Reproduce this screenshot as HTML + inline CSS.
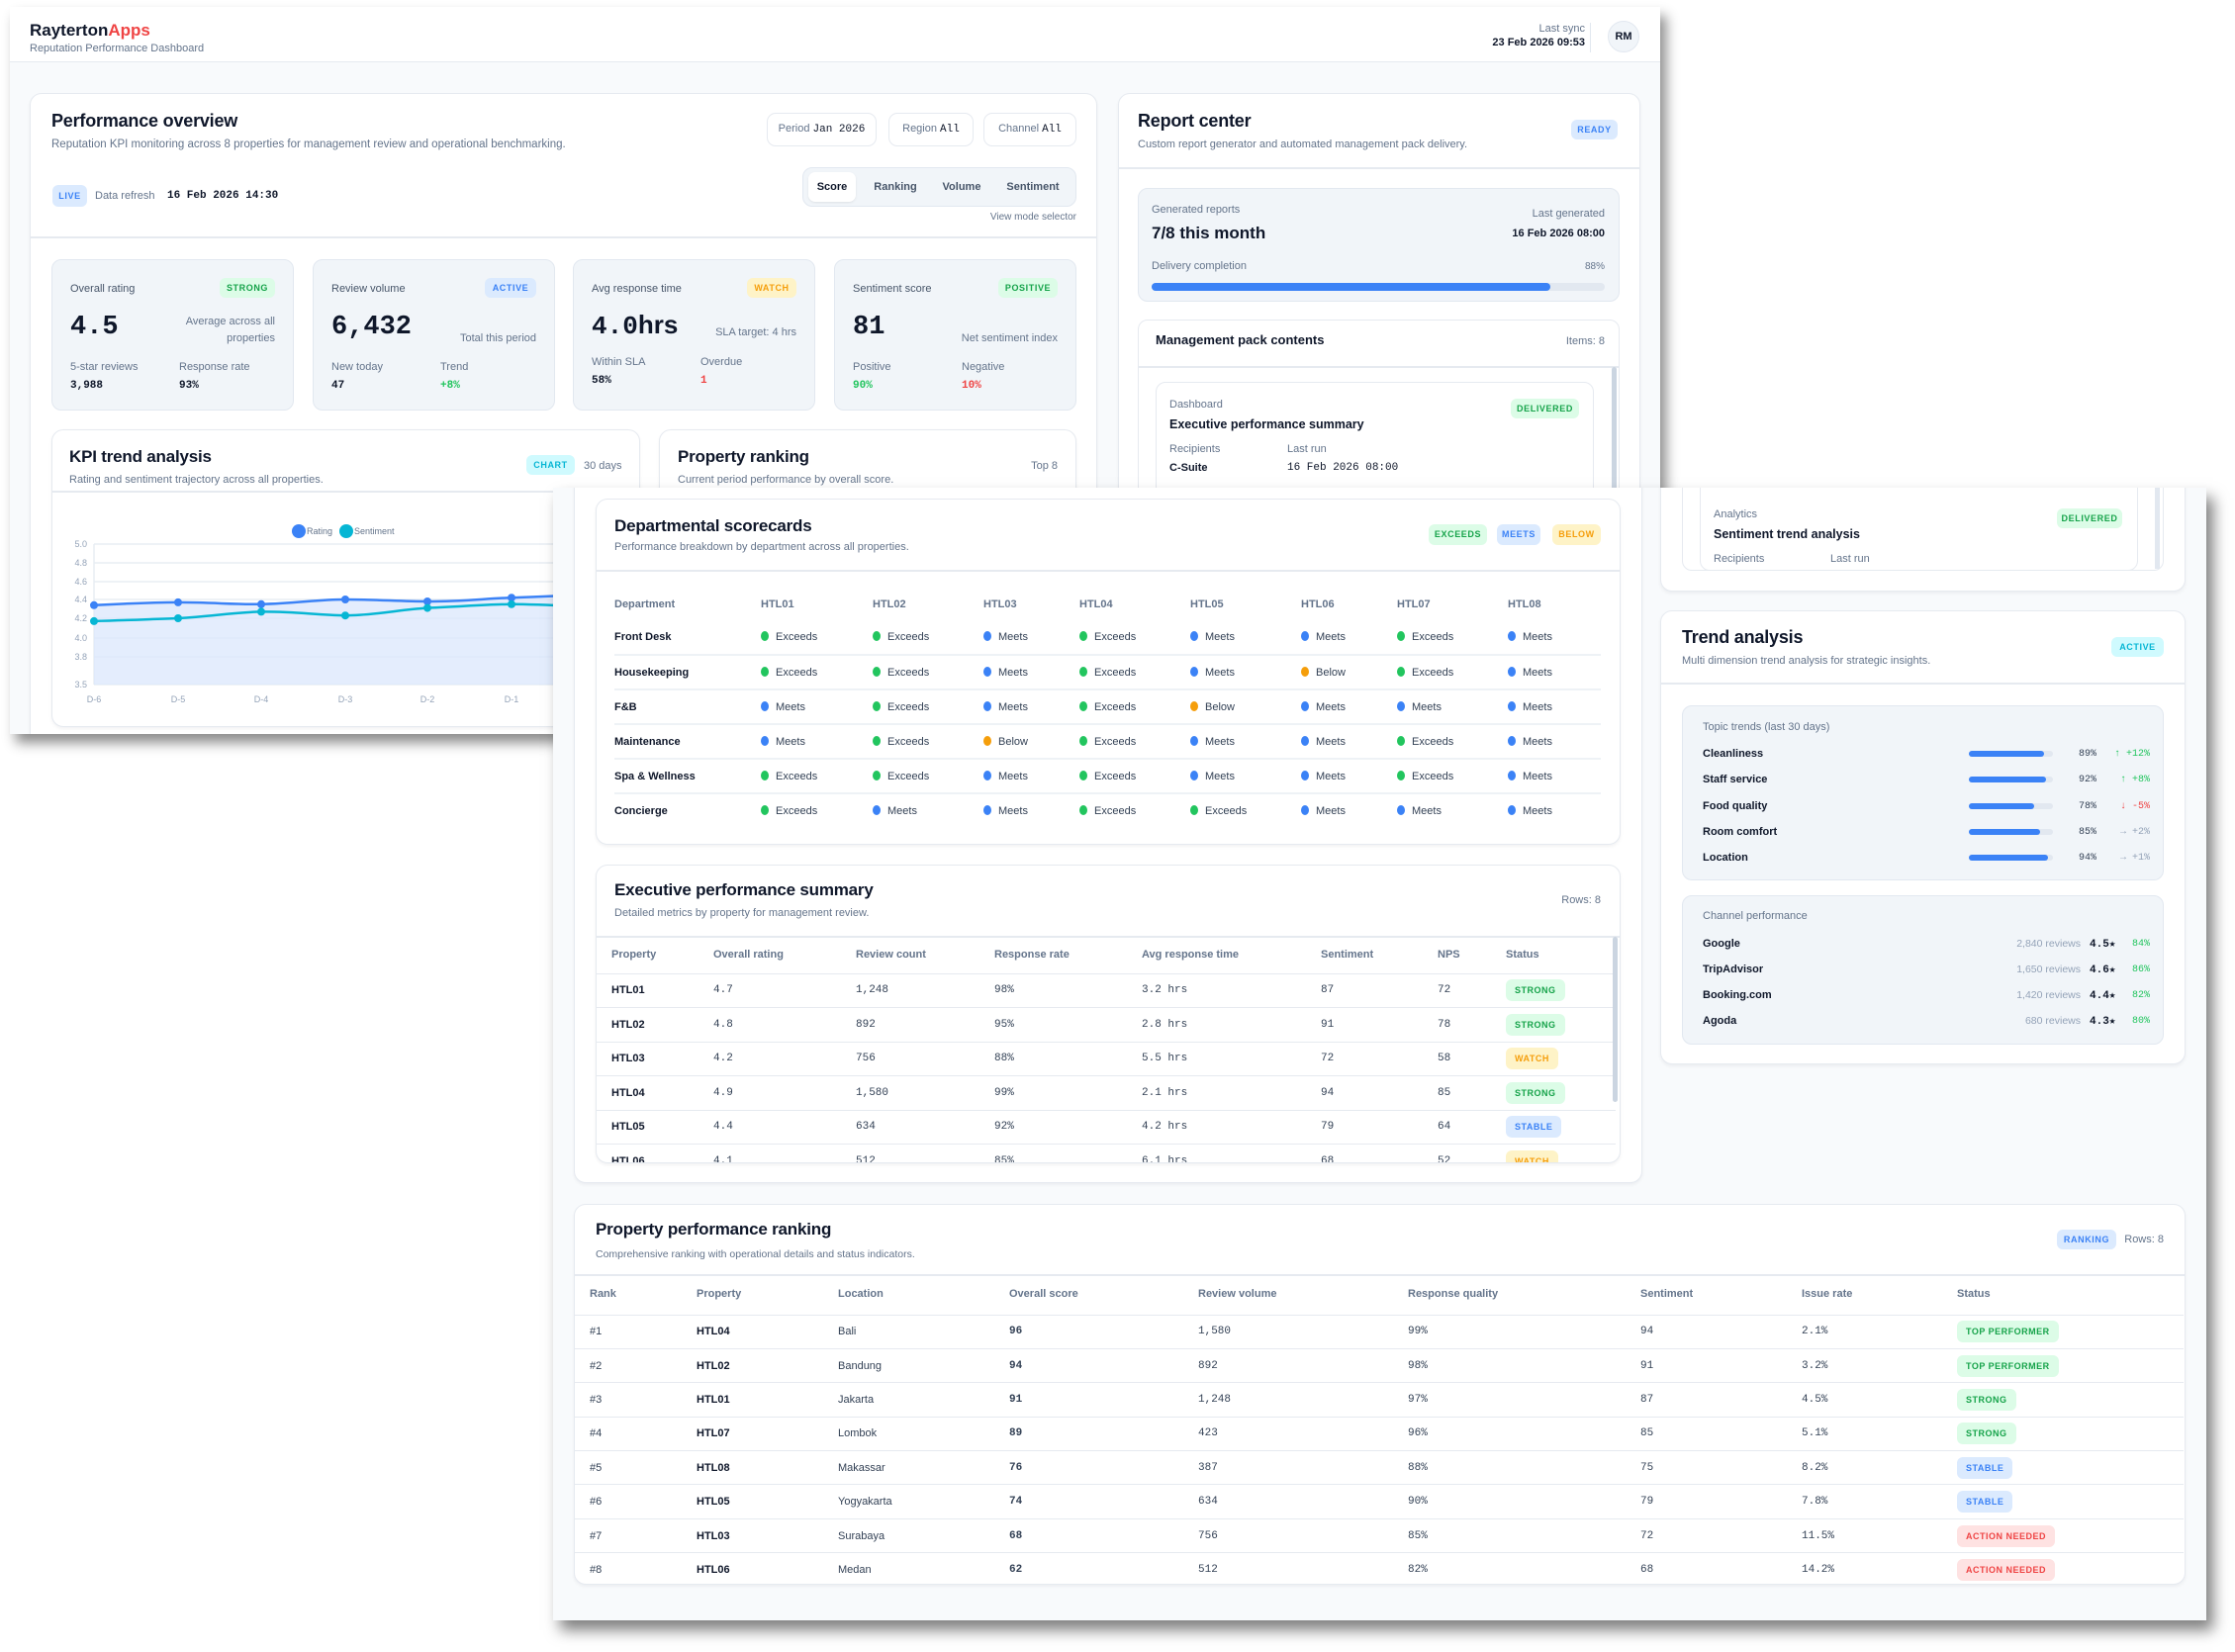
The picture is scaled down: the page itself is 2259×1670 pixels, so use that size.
<!DOCTYPE html>
<html><head><meta charset="utf-8">
<style>
*{box-sizing:border-box}
body{margin:0;width:2259px;height:1670px;background:#fff;position:relative;overflow:hidden;font-family:"Liberation Sans",sans-serif;color:#0f172a}
.p{position:absolute;overflow:hidden;background:#f8fafc}
.a{position:absolute;white-space:nowrap;line-height:16px}
.card{position:absolute;background:#fff;border:1.5px solid #e6eaf0;border-radius:12px;box-shadow:0 2px 3px rgba(15,23,42,.05)}
.box{position:absolute;background:#f1f5f9;border:1.5px solid #e2e8f0;border-radius:10px}
.m{font-family:"Liberation Mono",monospace}
.mu{color:#64748b}
.t{font-size:18px;font-weight:700;line-height:24px;letter-spacing:-.2px}
.s{font-size:11.5px;color:#64748b}
.b{position:absolute;font-size:9px;font-weight:700;letter-spacing:.6px;border-radius:6px;line-height:20px;height:20px;text-align:center}
.ib{display:inline-block;font-size:9px;font-weight:700;letter-spacing:.5px;border-radius:6px;line-height:22px;padding:0 9px}
.g{background:#dcfce7;color:#16a34a}.bl{background:#dbeafe;color:#3b82f6}.o{background:#fef3c7;color:#f59e0b}.r{background:#fee2e2;color:#ef4444}.c{background:#cffafe;color:#06b6d4}
.hl{position:absolute;height:1.5px;background:#e6eaf0}
table{border-collapse:collapse;table-layout:fixed;position:absolute}
td,th{padding:0;text-align:left;white-space:nowrap;font-size:11px}
th{font-weight:600;color:#64748b}
.dt td{height:35px;border-bottom:2px solid #eef2f6;color:#334155}
.dt tr:last-child td{border-bottom:none}
.dt td:first-child{font-weight:700;color:#0f172a}
.d{display:inline-block;width:8px;height:10px;border-radius:50%;margin-right:7px;vertical-align:-1px}
.dg{background:#22c55e}.db{background:#3b82f6}.do{background:#f59e0b}
.et td{height:34.5px;border-top:1.5px solid #e6eaf0;color:#334155}
.et td:first-child,.rt td:nth-child(2){font-weight:700;color:#0f172a}
.rt td{height:34.4px;border-top:1.5px solid #e6eaf0;color:#334155}
</style></head><body>

<!-- PANEL A -->
<div class="p" style="left:10px;top:7px;width:1668px;height:735px;box-shadow:6px 9px 12px rgba(0,0,0,.45)">
 <div class="a" style="left:0;top:0;width:1668px;height:56px;background:#fff;border-bottom:1.5px solid #e6eaf0"></div>
 <div class="a" style="left:20px;top:13px;font-size:17px;font-weight:700;line-height:22px">Rayterton<span style="color:#ef4444">Apps</span></div>
 <div class="a s" style="left:20px;top:34px;font-size:11px">Reputation Performance Dashboard</div>
 <div class="a mu" style="right:76px;top:14px;font-size:11px;text-align:right">Last sync</div>
 <div class="a" style="right:76px;top:28px;font-size:11px;font-weight:600;text-align:right">23 Feb 2026 09:53</div>
 <div class="a" style="left:1597px;top:16px;width:1px;height:30px;background:#e2e8f0"></div>
 <div class="a" style="left:1615px;top:14px;width:32px;height:32px;border-radius:50%;background:#f1f5f9;border:1px solid #e2e8f0;font-size:11px;font-weight:700;text-align:center;line-height:30px">RM</div>

 <!-- Performance overview card -->
 <div class="card" style="left:20px;top:87px;width:1079px;height:700px"></div>
 <div class="a t" style="left:42px;top:103px">Performance overview</div>
 <div class="a s" style="left:42px;top:131px">Reputation KPI monitoring across 8 properties for management review and operational benchmarking.</div>
 <div class="a" style="left:765px;top:107px;width:111px;height:34px;border:1.5px solid #e6eaf0;border-radius:9px;background:#fff;font-size:11px;line-height:31px;text-align:center"><span class="mu">Period</span> <span class="m">Jan 2026</span></div>
 <div class="a" style="left:888px;top:107px;width:86px;height:34px;border:1.5px solid #e6eaf0;border-radius:9px;background:#fff;font-size:11px;line-height:31px;text-align:center"><span class="mu">Region</span> <span class="m">All</span></div>
 <div class="a" style="left:984px;top:107px;width:94px;height:34px;border:1.5px solid #e6eaf0;border-radius:9px;background:#fff;font-size:11px;line-height:31px;text-align:center"><span class="mu">Channel</span> <span class="m">All</span></div>
 <div class="b bl" style="left:43px;top:180px;width:35px;height:22px;line-height:22px">LIVE</div>
 <div class="a s" style="left:86px;top:183px;font-size:11px">Data refresh</div>
 <div class="a m" style="left:159px;top:183px;font-size:11px;font-weight:700">16 Feb 2026 14:30</div>
 <div class="a" style="left:801px;top:162px;width:277px;height:40px;background:#f1f5f9;border:1.5px solid #e2e8f0;border-radius:10px"></div>
 <div class="a" style="left:807px;top:167px;width:48px;height:30px;background:#fff;border-radius:7px;box-shadow:0 1px 2px rgba(0,0,0,.08)"></div>
 <div class="a" style="left:831px;top:174px;transform:translateX(-50%);font-size:11px;font-weight:700">Score</div>
 <div class="a" style="left:895px;top:174px;transform:translateX(-50%);font-size:11px;font-weight:600;color:#475569">Ranking</div>
 <div class="a" style="left:962px;top:174px;transform:translateX(-50%);font-size:11px;font-weight:600;color:#475569">Volume</div>
 <div class="a" style="left:1034px;top:174px;transform:translateX(-50%);font-size:11px;font-weight:600;color:#475569">Sentiment</div>
 <div class="a mu" style="right:590px;top:205px;font-size:10px">View mode selector</div>
 <div class="hl" style="left:21px;top:232px;width:1077px"></div>

 <!-- KPI cards -->
 <div class="box" style="left:42px;top:255px;width:245px;height:153px">
  <div class="a mu" style="left:18px;top:21px;font-size:11px;color:#475569">Overall rating</div>
  <div class="b g" style="right:18px;top:18px;width:56px">STRONG</div>
  <div class="a m" style="left:18px;top:53px;font-size:27px;font-weight:700;line-height:30px">4.5</div>
  <div class="a mu" style="right:18px;top:54px;font-size:11px;text-align:right;line-height:17px;white-space:normal;width:110px">Average across all properties</div>
  <div class="a mu" style="left:18px;top:100px;font-size:11px">5-star reviews</div>
  <div class="a mu" style="left:128px;top:100px;font-size:11px">Response rate</div>
  <div class="a m" style="left:18px;top:119px;font-size:11px;font-weight:700">3,988</div>
  <div class="a m" style="left:128px;top:119px;font-size:11px;font-weight:700">93%</div>
 </div>
 <div class="box" style="left:306px;top:255px;width:245px;height:153px">
  <div class="a mu" style="left:18px;top:21px;font-size:11px;color:#475569">Review volume</div>
  <div class="b bl" style="right:18px;top:18px;width:52px">ACTIVE</div>
  <div class="a m" style="left:18px;top:53px;font-size:27px;font-weight:700;line-height:30px">6,432</div>
  <div class="a mu" style="right:18px;top:71px;font-size:11px">Total this period</div>
  <div class="a mu" style="left:18px;top:100px;font-size:11px">New today</div>
  <div class="a mu" style="left:128px;top:100px;font-size:11px">Trend</div>
  <div class="a m" style="left:18px;top:119px;font-size:11px;font-weight:700">47</div>
  <div class="a m" style="left:128px;top:119px;font-size:11px;font-weight:700;color:#22c55e">+8%</div>
 </div>
 <div class="box" style="left:569px;top:255px;width:245px;height:153px">
  <div class="a mu" style="left:18px;top:21px;font-size:11px;color:#475569">Avg response time</div>
  <div class="b o" style="right:18px;top:18px;width:50px">WATCH</div>
  <div class="a" style="left:18px;top:50px;font-size:26px;font-weight:700;line-height:30px"><span class="m">4.0</span>hrs</div>
  <div class="a mu" style="right:18px;top:65px;font-size:11px">SLA target: 4 hrs</div>
  <div class="a mu" style="left:18px;top:95px;font-size:11px">Within SLA</div>
  <div class="a mu" style="left:128px;top:95px;font-size:11px">Overdue</div>
  <div class="a m" style="left:18px;top:114px;font-size:11px;font-weight:700">58%</div>
  <div class="a m" style="left:128px;top:114px;font-size:11px;font-weight:700;color:#ef4444">1</div>
 </div>
 <div class="box" style="left:833px;top:255px;width:245px;height:153px">
  <div class="a mu" style="left:18px;top:21px;font-size:11px;color:#475569">Sentiment score</div>
  <div class="b g" style="right:18px;top:18px;width:60px">POSITIVE</div>
  <div class="a m" style="left:18px;top:53px;font-size:27px;font-weight:700;line-height:30px">81</div>
  <div class="a mu" style="right:18px;top:71px;font-size:11px">Net sentiment index</div>
  <div class="a mu" style="left:18px;top:100px;font-size:11px">Positive</div>
  <div class="a mu" style="left:128px;top:100px;font-size:11px">Negative</div>
  <div class="a m" style="left:18px;top:119px;font-size:11px;font-weight:700;color:#22c55e">90%</div>
  <div class="a m" style="left:128px;top:119px;font-size:11px;font-weight:700;color:#ef4444">10%</div>
 </div>

 <!-- KPI trend card -->
 <div class="card" style="left:42px;top:427px;width:595px;height:301px"></div>
 <div class="a t" style="left:60px;top:443px;font-size:17px">KPI trend analysis</div>
 <div class="a s" style="left:60px;top:470px;font-size:11px">Rating and sentiment trajectory across all properties.</div>
 <div class="b c" style="left:522px;top:453px;width:49px">CHART</div>
 <div class="a mu" style="left:580px;top:456px;font-size:11px">30 days</div>
 <div class="hl" style="left:43px;top:489px;width:593px"></div>
 <svg class="a" style="left:0;top:0" width="640" height="735">
  <g stroke="#e8edf3" stroke-width="1.5">
   <line x1="85" y1="543" x2="640" y2="543"/><line x1="85" y1="562" x2="640" y2="562"/><line x1="85" y1="581" x2="640" y2="581"/><line x1="85" y1="599" x2="640" y2="599"/><line x1="85" y1="618" x2="640" y2="618"/><line x1="85" y1="638" x2="640" y2="638"/><line x1="85" y1="657" x2="640" y2="657"/><line x1="85" y1="685" x2="640" y2="685"/><line x1="85" y1="543" x2="85" y2="685"/>
  </g>
  <g font-family="Liberation Sans" font-size="9" fill="#94a3b8" text-anchor="end">
   <text x="78" y="546">5.0</text><text x="78" y="565">4.8</text><text x="78" y="584">4.6</text><text x="78" y="602">4.4</text><text x="78" y="621">4.2</text><text x="78" y="641">4.0</text><text x="78" y="660">3.8</text><text x="78" y="688">3.5</text>
  </g>
  <g font-family="Liberation Sans" font-size="9" fill="#94a3b8" text-anchor="middle">
   <text x="85" y="703">D-6</text><text x="170" y="703">D-5</text><text x="254" y="703">D-4</text><text x="339" y="703">D-3</text><text x="422" y="703">D-2</text><text x="507" y="703">D-1</text>
  </g>
  <path d="M85 604.8 C120 603 140 602 170 601.9 C205 602 225 604 254 603.8 C290 603 310 599 339 599 C370 599 395 601 422 601 C460 601 480 598 507 597.2 C540 596 570 595 592 593.4 L640 590 L640 685 L85 685Z" fill="#dbe7fc" opacity=".75"/>
  <path d="M85 604.8 C120 603 140 602 170 601.9 C205 602 225 604 254 603.8 C290 603 310 599 339 599 C370 599 395 601 422 601 C460 601 480 598 507 597.2 C540 596 570 595 592 593.4 L640 590" fill="none" stroke="#3b82f6" stroke-width="2.5"/>
  <path d="M85 620.9 C120 620 140 619 170 618 C205 616 225 612 254 611.4 C290 611 310 615 339 615.2 C370 615 395 609 422 607.6 C460 606 480 604 507 603.8 C540 604 570 606 592 606.7" fill="none" stroke="#06b6d4" stroke-width="2.5"/>
  <g fill="#3b82f6"><circle cx="85" cy="604.8" r="4"/><circle cx="170" cy="601.9" r="4"/><circle cx="254" cy="603.8" r="4"/><circle cx="339" cy="599" r="4"/><circle cx="422" cy="601" r="4"/><circle cx="507" cy="597.2" r="4"/></g>
  <g fill="#06b6d4"><circle cx="85" cy="620.9" r="4"/><circle cx="170" cy="618" r="4"/><circle cx="254" cy="611.4" r="4"/><circle cx="339" cy="615.2" r="4"/><circle cx="422" cy="607.6" r="4"/><circle cx="507" cy="603.8" r="4"/></g>
  <circle cx="292" cy="530" r="7" fill="#3b82f6"/><text x="300" y="533" font-family="Liberation Sans" font-size="9" fill="#64748b">Rating</text>
  <circle cx="340" cy="530" r="7" fill="#06b6d4"/><text x="348" y="533" font-family="Liberation Sans" font-size="9" fill="#64748b">Sentiment</text>
 </svg>

 <!-- Property ranking card -->
 <div class="card" style="left:656px;top:427px;width:422px;height:301px"></div>
 <div class="a t" style="left:675px;top:443px;font-size:17px">Property ranking</div>
 <div class="a s" style="left:675px;top:470px;font-size:11px">Current period performance by overall score.</div>
 <div class="a mu" style="right:609px;top:456px;font-size:11px">Top 8</div>

 <!-- Report center -->
 <div class="card" style="left:1120px;top:87px;width:528px;height:700px"></div>
 <div class="a t" style="left:1140px;top:103px">Report center</div>
 <div class="a s" style="left:1140px;top:131px;font-size:11px">Custom report generator and automated management pack delivery.</div>
 <div class="b bl" style="left:1578px;top:114px;width:47px">READY</div>
 <div class="hl" style="left:1121px;top:162px;width:526px"></div>
 <div class="box" style="left:1140px;top:183px;width:487px;height:115px"></div>
 <div class="a s" style="left:1154px;top:197px;font-size:11px">Generated reports</div>
 <div class="a" style="left:1154px;top:218px;font-size:17px;font-weight:600;line-height:22px">7/8 this month</div>
 <div class="a s" style="right:56px;top:201px;font-size:11px">Last generated</div>
 <div class="a" style="right:56px;top:221px;font-size:11px;font-weight:700">16 Feb 2026 08:00</div>
 <div class="a s" style="left:1154px;top:254px;font-size:11px">Delivery completion</div>
 <div class="a s" style="right:56px;top:255px;font-size:10px">88%</div>
 <div class="a" style="left:1154px;top:279px;width:458px;height:8px;border-radius:4px;background:#e2e8f0"><div style="width:88%;height:8px;border-radius:4px;background:#3b82f6"></div></div>
 <div class="a" style="left:1140px;top:316px;width:487px;height:430px;background:#fff;border:1.5px solid #e6eaf0;border-radius:10px"></div>
 <div class="a" style="left:1158px;top:329px;font-size:13px;font-weight:700">Management pack contents</div>
 <div class="a mu" style="right:56px;top:330px;font-size:11px">Items: 8</div>
 <div class="hl" style="left:1141px;top:363px;width:485px"></div>
 <div class="a" style="left:1619px;top:364px;width:5px;height:380px;background:#cbd5e1;border-radius:3px"></div>
 <div class="a" style="left:1158px;top:379px;width:443px;height:400px;background:#fff;border:1.5px solid #e6eaf0;border-radius:10px"></div>
 <div class="a s" style="left:1172px;top:394px;font-size:11px">Dashboard</div>
 <div class="a" style="left:1172px;top:414px;font-size:12.5px;font-weight:700">Executive performance summary</div>
 <div class="b g" style="left:1517px;top:396px;width:69px">DELIVERED</div>
 <div class="a s" style="left:1172px;top:439px;font-size:11px">Recipients</div>
 <div class="a s" style="left:1291px;top:439px;font-size:11px">Last run</div>
 <div class="a" style="left:1172px;top:458px;font-size:11px;font-weight:700">C-Suite</div>
 <div class="a m" style="left:1291px;top:458px;font-size:11px">16 Feb 2026 08:00</div>
</div>

<!-- PANEL B -->
<div class="p" style="left:559px;top:493px;width:1671px;height:1145px;box-shadow:7px 10px 14px rgba(0,0,0,.5)">
 <!-- left container -->
 <div class="card" style="left:21px;top:-20px;width:1080px;height:723px"></div>
 <!-- Departmental -->
 <div class="card" style="left:43px;top:11px;width:1036px;height:350px"></div>
 <div class="a t" style="left:62px;top:27px;font-size:17px">Departmental scorecards</div>
 <div class="a s" style="left:62px;top:52px;font-size:11px">Performance breakdown by department across all properties.</div>
 <div class="b g" style="left:885px;top:37px;width:59px;height:21px;line-height:21px">EXCEEDS</div>
 <div class="b bl" style="left:954px;top:37px;width:44px;height:21px;line-height:21px">MEETS</div>
 <div class="b o" style="left:1010px;top:37px;width:49px;height:21px;line-height:21px">BELOW</div>
 <div class="hl" style="left:44px;top:83px;width:1034px"></div>
 <table class="dt" style="left:62px;top:101px;width:997px">
  <colgroup><col style="width:148px"><col style="width:113px"><col style="width:112px"><col style="width:97px"><col style="width:112px"><col style="width:112px"><col style="width:97px"><col style="width:112px"><col style="width:94px"></colgroup>
  <tr><th style="height:33px;border:none">Department</th><th>HTL01</th><th>HTL02</th><th>HTL03</th><th>HTL04</th><th>HTL05</th><th>HTL06</th><th>HTL07</th><th>HTL08</th></tr>
  <tr><td>Front Desk</td><td><i class="d dg"></i>Exceeds</td><td><i class="d dg"></i>Exceeds</td><td><i class="d db"></i>Meets</td><td><i class="d dg"></i>Exceeds</td><td><i class="d db"></i>Meets</td><td><i class="d db"></i>Meets</td><td><i class="d dg"></i>Exceeds</td><td><i class="d db"></i>Meets</td></tr>
  <tr><td>Housekeeping</td><td><i class="d dg"></i>Exceeds</td><td><i class="d dg"></i>Exceeds</td><td><i class="d db"></i>Meets</td><td><i class="d dg"></i>Exceeds</td><td><i class="d db"></i>Meets</td><td><i class="d do"></i>Below</td><td><i class="d dg"></i>Exceeds</td><td><i class="d db"></i>Meets</td></tr>
  <tr><td>F&amp;B</td><td><i class="d db"></i>Meets</td><td><i class="d dg"></i>Exceeds</td><td><i class="d db"></i>Meets</td><td><i class="d dg"></i>Exceeds</td><td><i class="d do"></i>Below</td><td><i class="d db"></i>Meets</td><td><i class="d db"></i>Meets</td><td><i class="d db"></i>Meets</td></tr>
  <tr><td>Maintenance</td><td><i class="d db"></i>Meets</td><td><i class="d dg"></i>Exceeds</td><td><i class="d do"></i>Below</td><td><i class="d dg"></i>Exceeds</td><td><i class="d db"></i>Meets</td><td><i class="d db"></i>Meets</td><td><i class="d dg"></i>Exceeds</td><td><i class="d db"></i>Meets</td></tr>
  <tr><td>Spa &amp; Wellness</td><td><i class="d dg"></i>Exceeds</td><td><i class="d dg"></i>Exceeds</td><td><i class="d db"></i>Meets</td><td><i class="d dg"></i>Exceeds</td><td><i class="d db"></i>Meets</td><td><i class="d db"></i>Meets</td><td><i class="d dg"></i>Exceeds</td><td><i class="d db"></i>Meets</td></tr>
  <tr><td>Concierge</td><td><i class="d dg"></i>Exceeds</td><td><i class="d db"></i>Meets</td><td><i class="d db"></i>Meets</td><td><i class="d dg"></i>Exceeds</td><td><i class="d dg"></i>Exceeds</td><td><i class="d db"></i>Meets</td><td><i class="d db"></i>Meets</td><td><i class="d db"></i>Meets</td></tr>
 </table>

 <!-- Executive summary -->
 <div class="card" style="left:43px;top:381px;width:1036px;height:302px;overflow:hidden">
  <table class="et" style="left:0;top:72px;width:1030px">
   <colgroup><col style="width:118px"><col style="width:144px"><col style="width:140px"><col style="width:149px"><col style="width:181px"><col style="width:118px"><col style="width:69px"><col style="width:111px"></colgroup>
   <tr><th style="height:37px;padding-left:15px">Property</th><th>Overall rating</th><th>Review count</th><th>Response rate</th><th>Avg response time</th><th>Sentiment</th><th>NPS</th><th>Status</th></tr>
   <tr><td style="padding-left:15px">HTL01</td><td class="m">4.7</td><td class="m">1,248</td><td class="m">98%</td><td class="m">3.2 hrs</td><td class="m">87</td><td class="m">72</td><td><span class="ib g">STRONG</span></td></tr>
   <tr><td style="padding-left:15px">HTL02</td><td class="m">4.8</td><td class="m">892</td><td class="m">95%</td><td class="m">2.8 hrs</td><td class="m">91</td><td class="m">78</td><td><span class="ib g">STRONG</span></td></tr>
   <tr><td style="padding-left:15px">HTL03</td><td class="m">4.2</td><td class="m">756</td><td class="m">88%</td><td class="m">5.5 hrs</td><td class="m">72</td><td class="m">58</td><td><span class="ib o">WATCH</span></td></tr>
   <tr><td style="padding-left:15px">HTL04</td><td class="m">4.9</td><td class="m">1,580</td><td class="m">99%</td><td class="m">2.1 hrs</td><td class="m">94</td><td class="m">85</td><td><span class="ib g">STRONG</span></td></tr>
   <tr><td style="padding-left:15px">HTL05</td><td class="m">4.4</td><td class="m">634</td><td class="m">92%</td><td class="m">4.2 hrs</td><td class="m">79</td><td class="m">64</td><td><span class="ib bl">STABLE</span></td></tr>
   <tr><td style="padding-left:15px">HTL06</td><td class="m">4.1</td><td class="m">512</td><td class="m">85%</td><td class="m">6.1 hrs</td><td class="m">68</td><td class="m">52</td><td><span class="ib o">WATCH</span></td></tr>
  </table>
 </div>
 <div class="a t" style="left:62px;top:395px;font-size:17px">Executive performance summary</div>
 <div class="a s" style="left:62px;top:422px;font-size:11px">Detailed metrics by property for management review.</div>
 <div class="a mu" style="right:612px;top:409px;font-size:11px">Rows: 8</div>
 <div class="hl" style="left:44px;top:453px;width:1034px"></div>
 <div class="a" style="left:1071px;top:454px;width:5px;height:167px;background:#cbd5e1;border-radius:3px"></div>

 <!-- right column upper card -->
 <div class="card" style="left:1119px;top:-20px;width:531px;height:125px"></div>
 <div class="a" style="left:1141px;top:-20px;width:487px;height:104px;background:#fff;border:1.5px solid #e6eaf0;border-radius:10px"></div>
 <div class="a" style="left:1619px;top:-10px;width:5px;height:92px;background:#e2e8f0"></div>
 <div class="a" style="left:1159px;top:-10px;width:443px;height:94px;background:#fff;border:1.5px solid #e6eaf0;border-radius:10px"></div>
 <div class="a s" style="left:1173px;top:19px;font-size:11px">Analytics</div>
 <div class="a" style="left:1173px;top:39px;font-size:12.5px;font-weight:700">Sentiment trend analysis</div>
 <div class="b g" style="left:1520px;top:21px;width:66px">DELIVERED</div>
 <div class="a s" style="left:1173px;top:64px;font-size:11px">Recipients</div>
 <div class="a s" style="left:1291px;top:64px;font-size:11px">Last run</div>

 <!-- Trend analysis -->
 <div class="card" style="left:1119px;top:124px;width:531px;height:459px"></div>
 <div class="a t" style="left:1141px;top:139px">Trend analysis</div>
 <div class="a s" style="left:1141px;top:167px;font-size:11px">Multi dimension trend analysis for strategic insights.</div>
 <div class="b c" style="left:1575px;top:151px;width:53px">ACTIVE</div>
 <div class="hl" style="left:1120px;top:197px;width:529px"></div>
 <div class="box" style="left:1141px;top:220px;width:487px;height:177px"></div>
 <div class="a s" style="left:1162px;top:234px;font-size:11px">Topic trends (last 30 days)</div>
 <div class="a" style="left:1162px;top:261px;font-size:11px;font-weight:600">Cleanliness</div>
 <div class="a" style="left:1162px;top:287px;font-size:11px;font-weight:600">Staff service</div>
 <div class="a" style="left:1162px;top:314px;font-size:11px;font-weight:600">Food quality</div>
 <div class="a" style="left:1162px;top:340px;font-size:11px;font-weight:600">Room comfort</div>
 <div class="a" style="left:1162px;top:366px;font-size:11px;font-weight:600">Location</div>
 <div class="a" style="left:1431px;top:266px;width:85px;height:6px;border-radius:3px;background:#e2e8f0"><div style="width:89%;height:6px;border-radius:3px;background:#3b82f6"></div></div>
 <div class="a" style="left:1431px;top:292px;width:85px;height:6px;border-radius:3px;background:#e2e8f0"><div style="width:92%;height:6px;border-radius:3px;background:#3b82f6"></div></div>
 <div class="a" style="left:1431px;top:319px;width:85px;height:6px;border-radius:3px;background:#e2e8f0"><div style="width:78%;height:6px;border-radius:3px;background:#3b82f6"></div></div>
 <div class="a" style="left:1431px;top:345px;width:85px;height:6px;border-radius:3px;background:#e2e8f0"><div style="width:85%;height:6px;border-radius:3px;background:#3b82f6"></div></div>
 <div class="a" style="left:1431px;top:371px;width:85px;height:6px;border-radius:3px;background:#e2e8f0"><div style="width:94%;height:6px;border-radius:3px;background:#3b82f6"></div></div>
 <div class="a m" style="right:111px;top:262px;font-size:10px;color:#334155">89%</div>
 <div class="a m" style="right:111px;top:288px;font-size:10px;color:#334155">92%</div>
 <div class="a m" style="right:111px;top:315px;font-size:10px;color:#334155">78%</div>
 <div class="a m" style="right:111px;top:341px;font-size:10px;color:#334155">85%</div>
 <div class="a m" style="right:111px;top:367px;font-size:10px;color:#334155">94%</div>
 <div class="a m" style="right:57px;top:262px;font-size:10px;color:#22c55e">↑ +12%</div>
 <div class="a m" style="right:57px;top:288px;font-size:10px;color:#22c55e">↑ +8%</div>
 <div class="a m" style="right:57px;top:315px;font-size:10px;color:#ef4444">↓ -5%</div>
 <div class="a m" style="right:57px;top:341px;font-size:10px;color:#94a3b8">→ +2%</div>
 <div class="a m" style="right:57px;top:367px;font-size:10px;color:#94a3b8">→ +1%</div>
 <div class="box" style="left:1141px;top:412px;width:487px;height:151px"></div>
 <div class="a s" style="left:1162px;top:425px;font-size:11px">Channel performance</div>
 <div class="a" style="left:1162px;top:453px;font-size:11px;font-weight:600">Google</div>
 <div class="a" style="left:1162px;top:479px;font-size:11px;font-weight:600">TripAdvisor</div>
 <div class="a" style="left:1162px;top:505px;font-size:11px;font-weight:600">Booking.com</div>
 <div class="a" style="left:1162px;top:531px;font-size:11px;font-weight:600">Agoda</div>
 <div class="a mu" style="right:127px;top:453px;font-size:10.5px;color:#94a3b8">2,840 reviews</div>
 <div class="a mu" style="right:127px;top:479px;font-size:10.5px;color:#94a3b8">1,650 reviews</div>
 <div class="a mu" style="right:127px;top:505px;font-size:10.5px;color:#94a3b8">1,420 reviews</div>
 <div class="a mu" style="right:127px;top:531px;font-size:10.5px;color:#94a3b8">680 reviews</div>
 <div class="a m" style="left:1553px;top:454px;font-size:11px;font-weight:700">4.5★</div>
 <div class="a m" style="left:1553px;top:480px;font-size:11px;font-weight:700">4.6★</div>
 <div class="a m" style="left:1553px;top:506px;font-size:11px;font-weight:700">4.4★</div>
 <div class="a m" style="left:1553px;top:532px;font-size:11px;font-weight:700">4.3★</div>
 <div class="a m" style="right:57px;top:454px;font-size:10px;color:#22c55e">84%</div>
 <div class="a m" style="right:57px;top:480px;font-size:10px;color:#22c55e">86%</div>
 <div class="a m" style="right:57px;top:506px;font-size:10px;color:#22c55e">82%</div>
 <div class="a m" style="right:57px;top:532px;font-size:10px;color:#22c55e">80%</div>

 <!-- Property performance ranking -->
 <div class="card" style="left:21px;top:724px;width:1629px;height:385px;overflow:hidden">
  <table class="rt" style="left:0;top:70px;width:1626px">
   <colgroup><col style="width:123px"><col style="width:143px"><col style="width:173px"><col style="width:191px"><col style="width:212px"><col style="width:235px"><col style="width:163px"><col style="width:157px"><col></colgroup>
   <tr><th style="height:41px;padding-left:15px">Rank</th><th>Property</th><th>Location</th><th>Overall score</th><th>Review volume</th><th>Response quality</th><th>Sentiment</th><th>Issue rate</th><th>Status</th></tr>
   <tr><td style="padding-left:15px">#1</td><td>HTL04</td><td>Bali</td><td class="m" style="font-weight:700">96</td><td class="m">1,580</td><td class="m">99%</td><td class="m">94</td><td class="m">2.1%</td><td><span class="ib g">TOP PERFORMER</span></td></tr>
   <tr><td style="padding-left:15px">#2</td><td>HTL02</td><td>Bandung</td><td class="m" style="font-weight:700">94</td><td class="m">892</td><td class="m">98%</td><td class="m">91</td><td class="m">3.2%</td><td><span class="ib g">TOP PERFORMER</span></td></tr>
   <tr><td style="padding-left:15px">#3</td><td>HTL01</td><td>Jakarta</td><td class="m" style="font-weight:700">91</td><td class="m">1,248</td><td class="m">97%</td><td class="m">87</td><td class="m">4.5%</td><td><span class="ib g">STRONG</span></td></tr>
   <tr><td style="padding-left:15px">#4</td><td>HTL07</td><td>Lombok</td><td class="m" style="font-weight:700">89</td><td class="m">423</td><td class="m">96%</td><td class="m">85</td><td class="m">5.1%</td><td><span class="ib g">STRONG</span></td></tr>
   <tr><td style="padding-left:15px">#5</td><td>HTL08</td><td>Makassar</td><td class="m" style="font-weight:700">76</td><td class="m">387</td><td class="m">88%</td><td class="m">75</td><td class="m">8.2%</td><td><span class="ib bl">STABLE</span></td></tr>
   <tr><td style="padding-left:15px">#6</td><td>HTL05</td><td>Yogyakarta</td><td class="m" style="font-weight:700">74</td><td class="m">634</td><td class="m">90%</td><td class="m">79</td><td class="m">7.8%</td><td><span class="ib bl">STABLE</span></td></tr>
   <tr><td style="padding-left:15px">#7</td><td>HTL03</td><td>Surabaya</td><td class="m" style="font-weight:700">68</td><td class="m">756</td><td class="m">85%</td><td class="m">72</td><td class="m">11.5%</td><td><span class="ib r">ACTION NEEDED</span></td></tr>
   <tr><td style="padding-left:15px">#8</td><td>HTL06</td><td>Medan</td><td class="m" style="font-weight:700">62</td><td class="m">512</td><td class="m">82%</td><td class="m">68</td><td class="m">14.2%</td><td><span class="ib r">ACTION NEEDED</span></td></tr>
  </table>
 </div>
 <div class="a t" style="left:43px;top:738px;font-size:17px">Property performance ranking</div>
 <div class="a s" style="left:43px;top:767px;font-size:10.5px">Comprehensive ranking with operational details and status indicators.</div>
 <div class="b bl" style="left:1520px;top:750px;width:60px">RANKING</div>
 <div class="a mu" style="right:43px;top:752px;font-size:11px">Rows: 8</div>
 <div class="hl" style="left:22px;top:795px;width:1627px"></div>
</div>
</body></html>
